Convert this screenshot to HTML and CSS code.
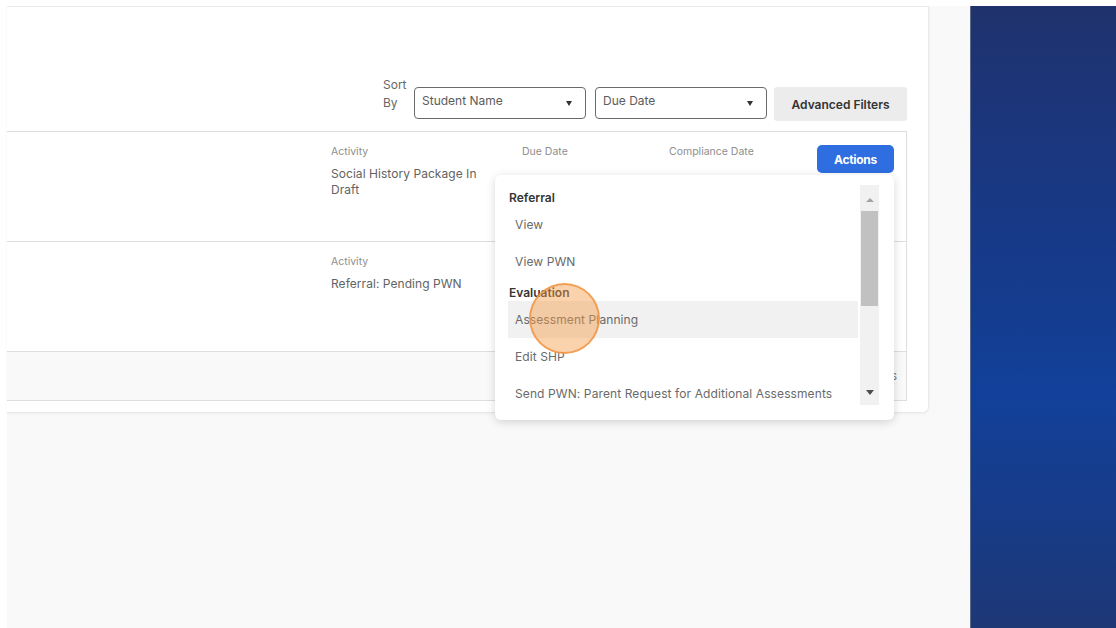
FILE: index.html
```html
<!DOCTYPE html>
<html lang="en">
<head>
<meta charset="utf-8">
<title>Referral Tasks</title>
<link rel="stylesheet" href="styles.css">
</head>
<body>
<div class="screen">
  <main class="workspace">
    <section class="card">
      <div class="toolbar">
        <span class="sort-label">Sort By</span>
        <div class="select"><span class="select-text">Student Name</span><i class="caret"></i></div>
        <div class="select"><span class="select-text">Due Date</span><i class="caret"></i></div>
        <button class="btn-filters">Advanced Filters</button>
      </div>

      <div class="table">
        <div class="row">
          <div class="cell"></div>
          <div class="cell activity">
            <div class="label">Activity</div>
            <div class="value">Social History Package In Draft</div>
          </div>
          <div class="cell"><div class="label">Due Date</div></div>
          <div class="cell"><div class="label">Compliance Date</div></div>
          <div class="cell actions">
            <button class="btn-actions">Actions</button>
            <div class="menu">
              <div class="menu-list">
                <div class="menu-group">Referral</div>
                <div class="menu-item">View</div>
                <div class="menu-item">View PWN</div>
                <div class="menu-group">Evaluation</div>
                <div class="menu-item is-hover">Assessment Planning</div>
                <div class="menu-item">Edit SHP</div>
                <div class="menu-item">Send PWN: Parent Request for Additional Assessments</div>
              </div>
              <div class="scrollbar">
                <span class="sb-up"></span>
                <span class="sb-thumb"></span>
                <span class="sb-track"></span>
                <span class="sb-down"></span>
              </div>
              <span class="click-ring"></span>
            </div>
          </div>
        </div>

        <div class="row">
          <div class="cell"></div>
          <div class="cell activity">
            <div class="label">Activity</div>
            <div class="value">Referral: Pending PWN</div>
          </div>
          <div class="cell"></div>
          <div class="cell"></div>
          <div class="cell"></div>
        </div>

        <div class="table-footer">2 items</div>
      </div>
    </section>
  </main>
  <aside class="side-panel"></aside>
</div>
</body>
</html>
```

FILE: styles.css
```css
* {
  box-sizing: border-box;
}

html,
body {
  margin: 0;
  padding: 0;
}

body {
  background: #ffffff;
  font-family: Inter, "Noto Sans", sans-serif;
  color: #626262;
  overflow: hidden;
}

button {
  font-family: inherit;
  border: 0;
  cursor: pointer;
}

/* page frame */
.screen {
  display: flex;
  height: 628px;
  padding: 6px 0 0 7px;
}

.workspace {
  width: 963px;
  background: #f9f9f9;
}

.side-panel {
  flex: 1;
  border-left: 1px solid #5d6a8a;
  background: linear-gradient(180deg, #1f326d 0%, #1a3780 25%, #133e93 55%, #12409a 62%, #183b85 85%, #1e3876 100%);
}

/* main card */
.card {
  width: 922px;
  background: #ffffff;
  border: 1px solid #e9e9e9;
  border-left: 0;
  border-bottom-right-radius: 6px;
  padding: 80px 21px 11px 0;
  box-shadow: 0 1px 3px rgba(0, 0, 0, 0.05);
}

/* sort / filter bar */
.toolbar {
  display: flex;
  justify-content: flex-end;
  align-items: flex-start;
  height: 34px;
  margin-bottom: 10px;
}

.sort-label {
  width: 27px;
  margin: -11px 4px 0 0;
  font-size: 12px;
  line-height: 18px;
  color: #686868;
}

.select {
  display: flex;
  align-items: center;
  justify-content: space-between;
  width: 172px;
  height: 32px;
  padding: 0 13px 0 7px;
  margin-right: 9px;
  border: 1px solid #6a6a6a;
  border-radius: 4px;
  font-size: 12px;
  color: #5c5c5c;
}

.select + .select {
  margin-right: 7px;
}

.select-text {
  margin-top: -5px;
}

.caret {
  width: 0;
  height: 0;
  border-left: 3.5px solid transparent;
  border-right: 3.5px solid transparent;
  border-top: 5px solid #333;
}

.btn-filters {
  width: 133px;
  height: 34px;
  border-radius: 3px;
  background: #ececec;
  color: #333;
  font-size: 12px;
  font-weight: 600;
}

/* task table */
.table {
  border: 1px solid #dedede;
  border-left: 0;
}

.row {
  display: grid;
  grid-template-columns: 324px 191px 147px 1fr 77px;
  height: 110px;
  padding: 13px 12px 0 0;
  border-bottom: 1px solid #dedede;
}

.label {
  font-size: 10.5px;
  line-height: 14px;
  color: #8e8e8e;
  margin-bottom: 7px;
}

.value {
  font-size: 12px;
  line-height: 16px;
  color: #636363;
  letter-spacing: 0.05px;
}

.activity {
  padding-right: 30px;
}

.actions {
  position: relative;
  align-self: start;
}

.btn-actions {
  width: 77px;
  height: 28px;
  border-radius: 5px;
  background: #2e6ee0;
  color: #ffffff;
  font-size: 12px;
  font-weight: 700;
  letter-spacing: -0.3px;
}

.table-footer {
  height: 48px;
  padding-right: 9px;
  background: #f9f9f9;
  text-align: right;
  font-size: 12px;
  line-height: 48px;
  color: #777;
}

/* actions dropdown */
.menu {
  position: absolute;
  top: 30px;
  right: 0;
  z-index: 10;
  display: flex;
  gap: 2px;
  width: 399px;
  height: 245px;
  padding: 10px 15px 15px 13px;
  background: #ffffff;
  border-radius: 6px;
  box-shadow: 0 2px 10px rgba(0, 0, 0, 0.16);
}

.menu-list {
  width: 350px;
  height: 220px;
  overflow: hidden;
}

.menu-group {
  height: 21px;
  padding: 3px 0 0 1px;
  font-size: 12px;
  line-height: 20px;
  font-weight: 600;
  color: #353535;
}

.menu-item {
  height: 37px;
  padding-left: 7px;
  font-size: 12px;
  line-height: 37px;
  color: #6a6a6a;
  letter-spacing: 0.1px;
  white-space: nowrap;
}

.menu-item.is-hover {
  background: #f1f1f1;
}

.scrollbar {
  display: flex;
  flex-direction: column;
  align-items: center;
  width: 19px;
  height: 220px;
  background: #f1f1f1;
}

.sb-up {
  flex: none;
  width: 0;
  height: 0;
  margin: 13px 0 9px;
  border-left: 4px solid transparent;
  border-right: 4px solid transparent;
  border-bottom: 4px solid #a3a3a3;
}

.sb-thumb {
  flex: none;
  width: 17px;
  height: 95px;
  background: #c1c1c1;
}

.sb-track {
  flex: 1;
}

.sb-down {
  flex: none;
  width: 0;
  height: 0;
  margin-bottom: 10px;
  border-left: 4.5px solid transparent;
  border-right: 4.5px solid transparent;
  border-top: 5px solid #4d4d4d;
}

/* click indicator */
.click-ring {
  position: absolute;
  left: 34px;
  top: 108px;
  width: 71px;
  height: 71px;
  border-radius: 50%;
  border: 2px solid rgba(240, 150, 70, 0.85);
  background: rgba(243, 155, 70, 0.45);
  pointer-events: none;
}
```
